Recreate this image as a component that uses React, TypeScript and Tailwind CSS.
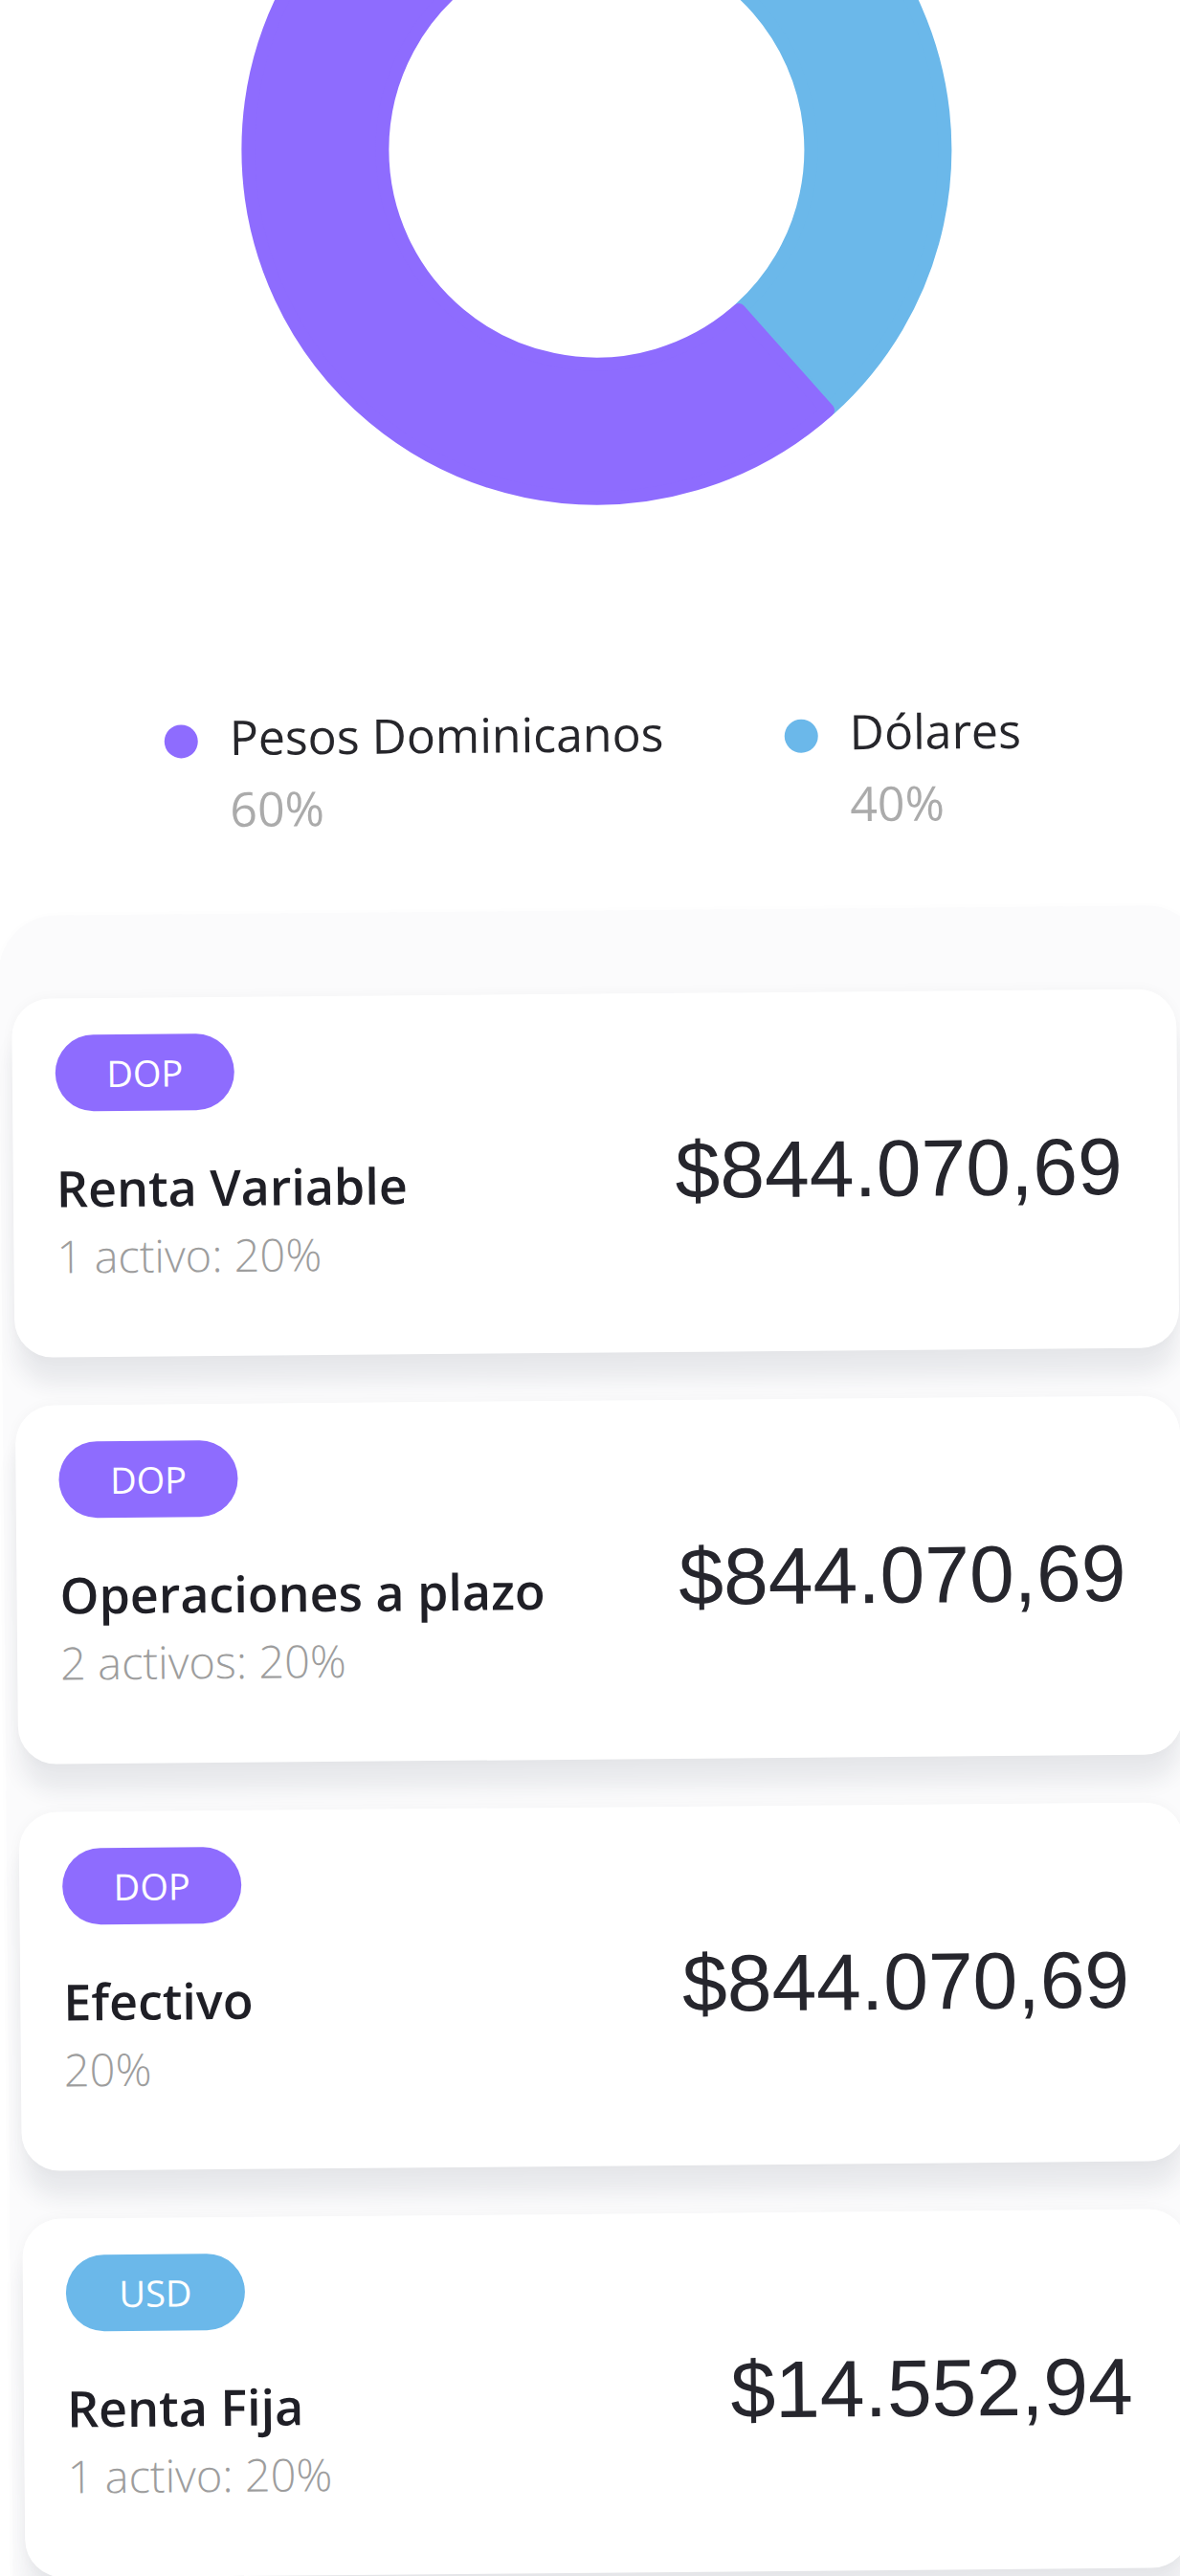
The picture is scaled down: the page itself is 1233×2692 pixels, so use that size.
import React from "react";

type Holding = {
  currency: "DOP" | "USD";
  title: string;
  detail: string;
  amount: string;
};

const holdings: Holding[] = [
  { currency: "DOP", title: "Renta Variable", detail: "1 activo: 20%", amount: "$844.070,69" },
  { currency: "DOP", title: "Operaciones a plazo", detail: "2 activos: 20%", amount: "$844.070,69" },
  { currency: "DOP", title: "Efectivo", detail: "20%", amount: "$844.070,69" },
  { currency: "USD", title: "Renta Fija", detail: "1 activo: 20%", amount: "$14.552,94" },
];

const PURPLE = "#8e6cfe";
const BLUE = "#6bb8ea";

// ring segment between two angles (degrees, clockwise from 3 o'clock)
function ringPath(cx: number, cy: number, R: number, r: number, a0: number, a1: number) {
  const rad = (a: number) => (a * Math.PI) / 180;
  const pt = (rr: number, a: number) => [cx + rr * Math.cos(rad(a)), cy + rr * Math.sin(rad(a))];
  const large = a1 - a0 > 180 ? 1 : 0;
  const [x0, y0] = pt(R, a0);
  const [x1, y1] = pt(R, a1);
  const [x2, y2] = pt(r, a1);
  const [x3, y3] = pt(r, a0);
  return `M${x0} ${y0} A${R} ${R} 0 ${large} 1 ${x1} ${y1} L${x2} ${y2} A${r} ${r} 0 ${large} 0 ${x3} ${y3} Z`;
}

function Donut() {
  const cx = 380;
  const cy = 162;
  const R = 364;
  const r = 224;
  return (
    <svg width="760" height="540" viewBox="0 0 760 540" className="ml-[242px] block">
      <path
        d={ringPath(cx, cy, R, r, -95, 48.5)}
        fill={BLUE}
        stroke={BLUE}
        strokeWidth="14"
        strokeLinejoin="round"
      />
      <path
        d={ringPath(cx, cy, R, r, 48.9, 262)}
        fill={PURPLE}
        stroke={PURPLE}
        strokeWidth="14"
        strokeLinejoin="round"
      />
    </svg>
  );
}

function LegendItem({ color, label, value }: { color: string; label: string; value: string }) {
  return (
    <div className="flex items-start gap-[33px]">
      <span className="mt-[24px] block h-[35px] w-[35px] rounded-full" style={{ backgroundColor: color }} />
      <div className="flex flex-col">
        <span className="text-[50px] leading-[75px] text-[#26262b]">{label}</span>
        <span className="text-[50px] leading-[75px] text-[#ababab]">{value}</span>
      </div>
    </div>
  );
}

function HoldingCard({ item }: { item: Holding }) {
  const badge = item.currency === "USD" ? "bg-[#6bb8ea]" : "bg-[#8e6cfe]";
  return (
    <div className="flex h-[375px] w-[1217px] items-center justify-between rounded-[40px] bg-white pl-[45px] pr-[58px] shadow-[0_30px_22px_-2px_rgba(40,50,70,0.085),0_0_14px_rgba(40,50,70,0.035)]">
      <div className="flex flex-col self-start pt-[38px]">
        <span
          className={`flex h-[80px] w-[187px] items-center justify-center rounded-full text-[38px] font-medium text-white ${badge}`}
        >
          {item.currency}
        </span>
        <span className="mt-[50px] text-[52px] font-semibold leading-[60px] text-[#1f1f26]">{item.title}</span>
        <span className="mt-[13px] text-[47px] font-light leading-[56px] text-[#9d9d9d]">{item.detail}</span>
      </div>
      <span className="mb-[5px] font-['Liberation_Sans',Arial,sans-serif] text-[84px] leading-[84px] text-[#26262d]">
        {item.amount}
      </span>
    </div>
  );
}

export default function App() {
  return (
    <div className="h-[2692px] w-[1233px] overflow-hidden bg-white font-['Open_Sans',sans-serif]">
      <div className="w-[1233px] origin-top-left -rotate-[0.5deg]">
        <Donut />

        <div className="mt-[195px] flex pl-[165px]">
          <div className="w-[648px]">
            <LegendItem color={PURPLE} label="Pesos Dominicanos" value="60%" />
          </div>
          <LegendItem color={BLUE} label="Dólares" value="40%" />
        </div>

        <div className="-ml-[10px] mt-[72px] flex w-[1260px] flex-col gap-[50px] rounded-[60px] bg-[#fbfbfc] pb-[60px] pl-[13px] pt-[87px] shadow-[0_0_8px_rgba(0,0,0,0.015)]">
          {holdings.map((item) => (
            <HoldingCard key={item.title} item={item} />
          ))}
        </div>
      </div>
    </div>
  );
}
